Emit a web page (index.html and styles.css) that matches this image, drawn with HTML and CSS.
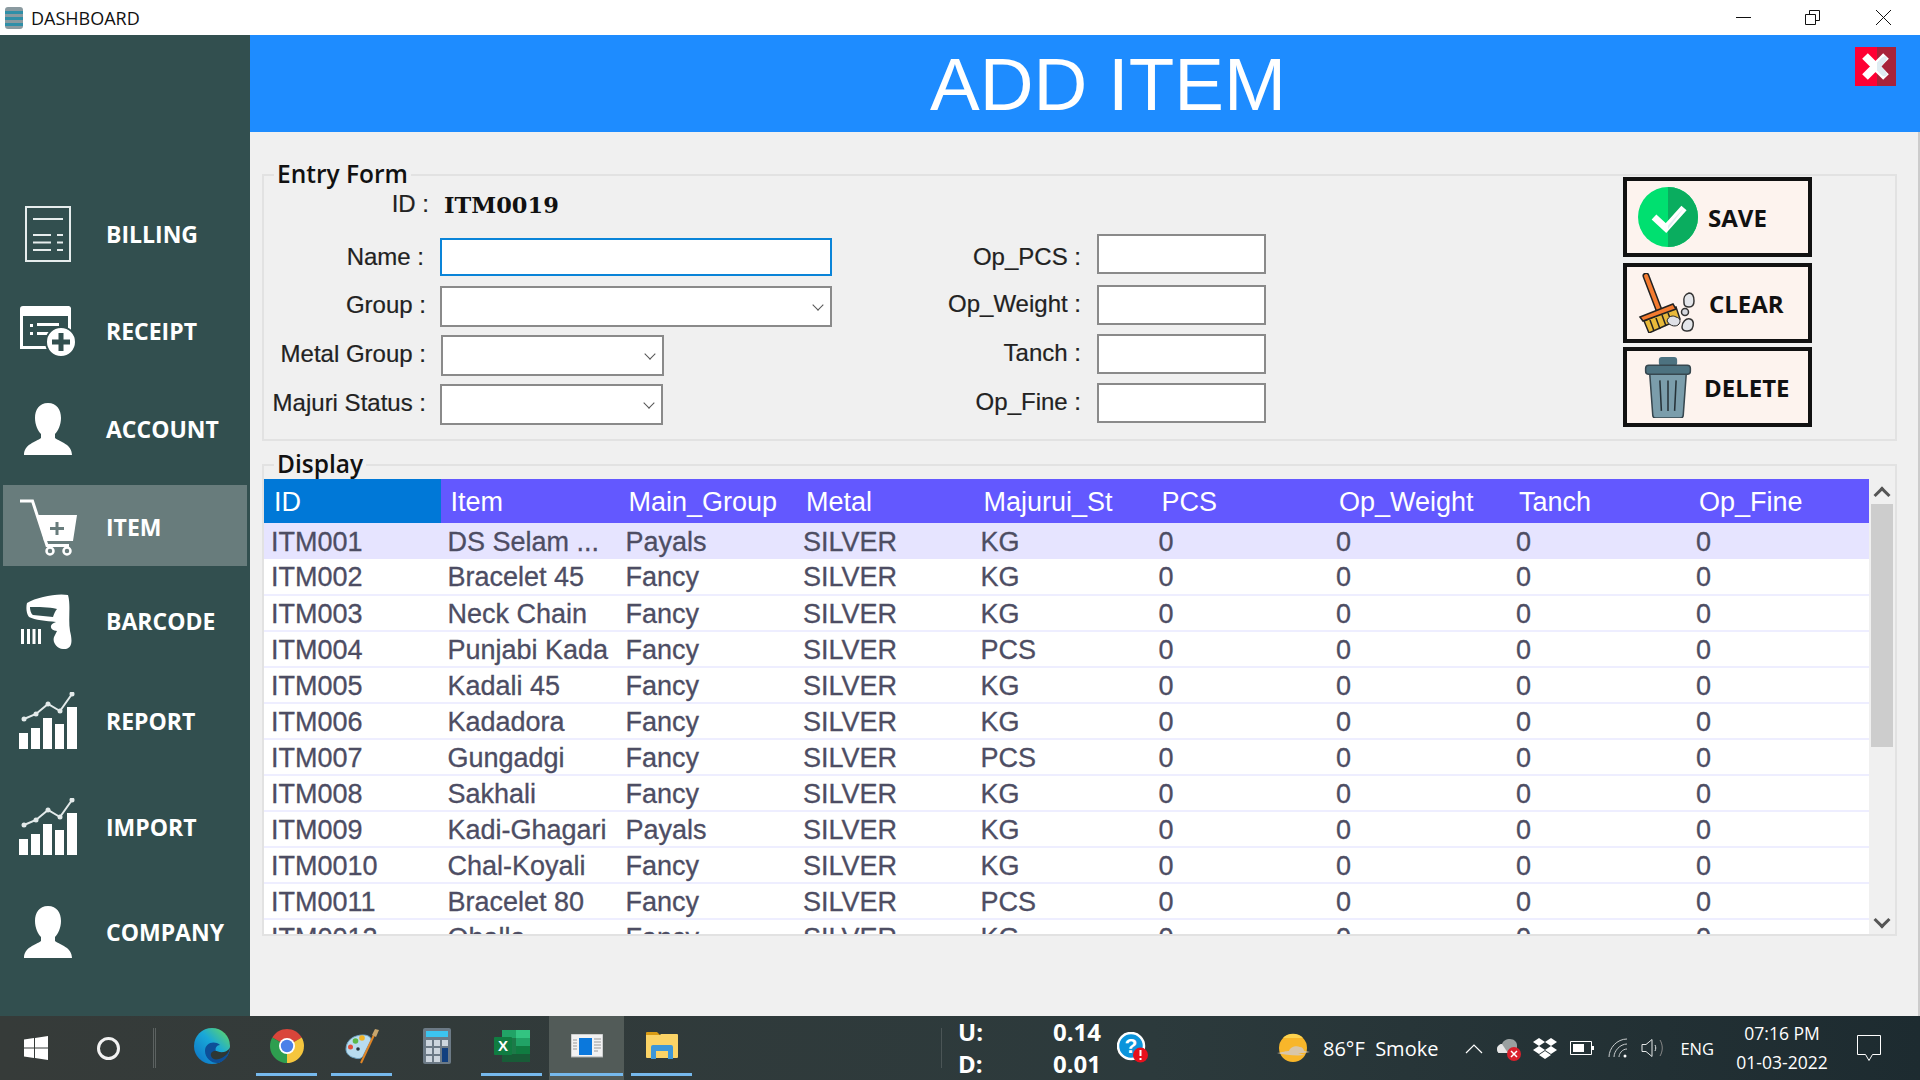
FILE: index.html
```html
<!DOCTYPE html>
<html lang="en">
  <head>
    <meta charset="UTF-8" />
    <title>DASHBOARD</title>
    <link rel="stylesheet" href="styles.css">
  </head>
  <body>
    <div class="titlebar">
      <svg class="title-icon" viewBox="0 0 20 24">
        <rect x="1" y="1" width="18" height="22" rx="3" fill="#8a9aa0"/>
        <rect x="1" y="5" width="18" height="3" fill="#2f8fa8"/>
        <rect x="1" y="11" width="18" height="3" fill="#2f8fa8"/>
        <rect x="1" y="17" width="18" height="3" fill="#2f8fa8"/>
      </svg>
      <span class="title-text">DASHBOARD</span>
      <div class="window-controls">
        <svg class="win-min" viewBox="0 0 15 15"><path d="M0 7.5h15" stroke="#111" fill="none"/></svg>
        <svg class="win-max" viewBox="0 0 15 15"><path d="M.5 4.5h10v10H.5zM4.500 4.500V.5h10v10h-4" stroke="#111" fill="none"/></svg>
        <svg class="win-close" viewBox="0 0 15 15"><path d="M0 0l15 15M15 0L0 15" stroke="#111" fill="none"/></svg>
      </div>
    </div>

    <div class="main">
      <nav class="sidebar">
        <a class="nav-item">
          <span class="nav-icon">
            <svg width="46" height="56" viewBox="0 0 46 56" fill="none" stroke="#e6eded" stroke-width="2">
              <rect x="1" y="1" width="44" height="54"/>
              <path d="M8 13h30M8 29h18M32 29h6M8 36.500h18M32 36.500h6M8 44h18M32 44h6"/>
            </svg>
          </span>
          <span>BILLING</span>
        </a>
        <a class="nav-item">
          <span class="nav-icon">
            <svg width="56" height="51" viewBox="0 0 56 51">
              <path d="M3 0h46a3 3 0 0 1 2 2v28h-3V10H3v30h26v3H0V3a3 3 0 0 1 3-3z" fill="#fff"/>
              <path d="M10 18h3v3h-3zM10 26h3v3h-3zM17 17h22v3H17zM17 26h14v3H17z" fill="#fff"/>
              <circle cx="41" cy="36" r="15" fill="#fff" stroke="#324f4f" stroke-width="2"/>
              <path d="M38.500 27h5v6.500H50v5h-6.500V45h-5v-6.500H32v-5h6.500z" fill="#324f4f"/>
            </svg>
          </span>
          <span>RECEIPT</span>
        </a>
        <a class="nav-item nav-account">
          <span class="nav-icon">
            <svg width="48" height="52" viewBox="0 0 48 52">
              <path class="person" d="M24 0C33 0 37 7 37 15 37 22 34 28 31 31V35C36 39 48 41 48 52H0C0 41 12 39 17 35V31C14 28 11 22 11 15 11 7 15 0 24 0Z"/>
            </svg>
          </span>
          <span>ACCOUNT</span>
        </a>
        <a class="nav-item nav-current active">
          <span class="nav-icon">
            <svg width="58" height="58" viewBox="0 0 58 58" fill="none" stroke="#fff">
              <path d="M1 3h12.500L28 47.500h22" stroke-width="3"/>
              <path d="M19 17h39l-4 26H25z" fill="#fff" stroke="none"/>
              <path d="M38 24v13M31 30.500h14" stroke="#687c7c" stroke-width="3"/>
              <circle cx="31" cy="53" r="3.500" stroke-width="2.500"/>
              <circle cx="48" cy="53" r="3.500" stroke-width="2.500"/>
            </svg>
          </span>
          <span>ITEM</span>
        </a>
        <a class="nav-item nav-barcode">
          <span class="nav-icon">
            <svg width="54" height="56" viewBox="0 0 54 56">
              <path fill="#fff" fill-rule="evenodd" d="M6 10C16 4 36 0 47 2 50 12 47 26 49 38 51 46 52 54 45 56 37 57 31 50 33 44L36 38C28 37 28 31 35 29 25 28 14 27 8 24 5 20 5 14 6 10ZM9 14C9 17 10 21 12 22L32 24C33 21 34 18 36 16 28 14 17 14 9 14Z"/>
              <path fill="#fff" d="M0 36h3v15H0zM6 36h3v15H6zM11.500 36h3v15h-3zM17 36h3v15h-3z"/>
            </svg>
          </span>
          <span>BARCODE</span>
        </a>
        <a class="nav-item nav-report">
          <span class="nav-icon">
            <svg width="58" height="58" viewBox="0 0 58 58">
              <path fill="#fff" d="M0 41h9v16H0zM12 36h9v21h-9zM24 26h9v31h-9zM36 32h9v25h-9zM48 15h10v42H48z"/>
              <path d="M5 27l12-5 12-10 12 7L53 2" fill="none" stroke="#e3eaea" stroke-width="2"/>
              <g fill="#e3eaea"><circle cx="5" cy="27" r="2.500"/><circle cx="17" cy="22" r="2.500"/><circle cx="29" cy="12" r="2.500"/><circle cx="41" cy="19" r="2.500"/><circle cx="53" cy="2" r="2.500"/></g>
            </svg>
          </span>
          <span>REPORT</span>
        </a>
        <a class="nav-item nav-import">
          <span class="nav-icon">
            <svg width="58" height="58" viewBox="0 0 58 58">
              <path fill="#fff" d="M0 41h9v16H0zM12 36h9v21h-9zM24 26h9v31h-9zM36 32h9v25h-9zM48 15h10v42H48z"/>
              <path d="M5 27l12-5 12-10 12 7L53 2" fill="none" stroke="#e3eaea" stroke-width="2"/>
              <g fill="#e3eaea"><circle cx="5" cy="27" r="2.500"/><circle cx="17" cy="22" r="2.500"/><circle cx="29" cy="12" r="2.500"/><circle cx="41" cy="19" r="2.500"/><circle cx="53" cy="2" r="2.500"/></g>
            </svg>
          </span>
          <span>IMPORT</span>
        </a>
        <a class="nav-item nav-company">
          <span class="nav-icon">
            <svg width="48" height="52" viewBox="0 0 48 52">
              <path class="person" d="M24 0C33 0 37 7 37 15 37 22 34 28 31 31V35C36 39 48 41 48 52H0C0 41 12 39 17 35V31C14 28 11 22 11 15 11 7 15 0 24 0Z"/>
            </svg>
          </span>
          <span>COMPANY</span>
        </a>
      </nav>

      <div class="content">
        <header class="page-header">
          <h1>ADD ITEM</h1>
          <button class="close-btn" type="button" aria-label="Close">
            <svg width="41" height="39" viewBox="0 0 41 39">
              <rect width="22" height="39" fill="#ff0033"/>
              <rect x="22" width="19" height="39" fill="#a8233a"/>
              <path d="M10 9l21 21M31 9L10 30" stroke="#fff" stroke-width="8" fill="none"/>
              <path d="M22 15.500L27 10.500 30 9l2 2-1 3-4.500 5.500 4.500 5 1 3-2 2-3-1-5-5z" fill="#e0ecf2"/>
            </svg>
          </button>
        </header>

        <div class="panels">
          <fieldset class="panel panel-entry">
            <legend>Entry Form</legend>
            <div class="entry-layout">
              <div class="form-left">
                <div class="field field-id">
                  <label>ID :</label>
                  <strong class="item-id">ITM0019</strong>
                </div>
                <div class="field field-name">
                  <label for="name">Name :</label>
                  <input class="input-wide input-focus" id="name" type="text" />
                </div>
                <div class="field field-group">
                  <label for="group">Group :</label>
                  <div class="combo combo-wide"><select id="group"></select></div>
                </div>
                <div class="field field-metal">
                  <label for="metal">Metal Group :</label>
                  <div class="combo combo-short"><select id="metal"></select></div>
                </div>
                <div class="field field-majuri">
                  <label for="majuri">Majuri Status :</label>
                  <div class="combo combo-short"><select id="majuri"></select></div>
                </div>
              </div>

              <div class="form-right">
                <div class="field-small field-pcs"><label for="pcs">Op_PCS :</label><input id="pcs" type="text" /></div>
                <div class="field-small field-weight"><label for="weight">Op_Weight :</label><input id="weight" type="text" /></div>
                <div class="field-small"><label for="tanch">Tanch :</label><input id="tanch" type="text" /></div>
                <div class="field-small"><label for="fine">Op_Fine :</label><input id="fine" type="text" /></div>
              </div>

              <div class="actions">
                <button class="action-btn" type="button">
                  <svg class="action-icon" width="60" height="60" viewBox="0 0 60 60">
                    <circle cx="30" cy="30" r="30" fill="#00e070"/>
                    <path d="M30 0a30 30 0 0 1 0 60z" fill="#0aad5f"/>
                    <path d="M16 30l12 11 18-20" fill="none" stroke="#fff" stroke-width="7"/>
                    <path d="M30 38.500L41.500 25.500 46 21l0 0 0 0-16 21z" fill="#e0ecf2"/>
                  </svg>
                  <span>SAVE</span>
                </button>
                <button class="action-btn action-clear" type="button">
                  <svg class="action-icon" width="58" height="60" viewBox="0 0 58 60">
                    <path d="M8 3l13 34" stroke="#222" stroke-width="7" stroke-linecap="round" fill="none"/>
                    <path d="M8 3l13 34" stroke="#f47b30" stroke-width="4" stroke-linecap="round" fill="none"/>
                    <path d="M6 48l32-14 4 12-31 14z" fill="#e8b93a" stroke="#222" stroke-width="1.500"/>
                    <path d="M12 47l4 11M18 45l4 11M24 42l4 11M30 40l4 10" stroke="#222" stroke-width="1.500"/>
                    <path d="M2 44l33-13 3 5-33 12z" fill="#f47b30" stroke="#222" stroke-width="1.500"/>
                    <path d="M29 48c1-5 6-6 9-4 4 1 5 4 3 7-2 3-9 3-12-3z" fill="#dfe0e6" stroke="#222"/>
                    <path d="M46 30c-1-5 1-9 5-10 4 0 5 4 5 8 0 4-2 6-5 6-3 0-5-1-5-4z" fill="#e4e6ea" stroke="#333" stroke-width="1.500"/>
                    <circle cx="47" cy="39" r="3.500" fill="#d6d8de" stroke="#333" stroke-width="1.500"/>
                    <path d="M44 54c0-5 4-9 8-8 4 1 4 6 2 10-2 3-10 3-10-2z" fill="#e4e6ea" stroke="#333" stroke-width="1.500"/>
                  </svg>
                  <span>CLEAR</span>
                </button>
                <button class="action-btn action-delete" type="button">
                  <svg class="action-icon" width="48" height="62" viewBox="0 0 46 61">
                    <rect x="14" y="1" width="18" height="9" rx="3" fill="#4d7280"/>
                    <path d="M5 17h36l-3 41q0 3-3 3H11q-3 0-3-3z" fill="#7b9dab" stroke="#37474f" stroke-width="1.500"/>
                    <rect x="1" y="9" width="44" height="9" rx="3" fill="#4d7280" stroke="#37474f" stroke-width="1.500"/>
                    <path d="M15 24l1.500 30M23 24v30M31 24l-1.500 30" stroke="#263238" stroke-width="1.500"/>
                  </svg>
                  <span>DELETE</span>
                </button>
              </div>
            </div>
          </fieldset>

          <fieldset class="panel panel-display">
            <legend>Display</legend>
            <div class="grid-wrap">
              <div class="grid-clip">
                <table class="grid">
                  <thead>
                    <tr>
                      <th class="sorted">ID</th><th>Item</th><th>Main_Group</th><th>Metal</th><th>Majurui_St</th><th>PCS</th><th>Op_Weight</th><th>Tanch</th><th>Op_Fine</th>
                    </tr>
                  </thead>
                  <tbody>
                    <tr class="selected"><td>ITM001</td><td>DS Selam ...</td><td>Payals</td><td>SILVER</td><td>KG</td><td>0</td><td>0</td><td>0</td><td>0</td></tr>
                    <tr><td>ITM002</td><td>Bracelet 45</td><td>Fancy</td><td>SILVER</td><td>KG</td><td>0</td><td>0</td><td>0</td><td>0</td></tr>
                    <tr><td>ITM003</td><td>Neck Chain</td><td>Fancy</td><td>SILVER</td><td>KG</td><td>0</td><td>0</td><td>0</td><td>0</td></tr>
                    <tr><td>ITM004</td><td>Punjabi Kada</td><td>Fancy</td><td>SILVER</td><td>PCS</td><td>0</td><td>0</td><td>0</td><td>0</td></tr>
                    <tr><td>ITM005</td><td>Kadali 45</td><td>Fancy</td><td>SILVER</td><td>KG</td><td>0</td><td>0</td><td>0</td><td>0</td></tr>
                    <tr><td>ITM006</td><td>Kadadora</td><td>Fancy</td><td>SILVER</td><td>KG</td><td>0</td><td>0</td><td>0</td><td>0</td></tr>
                    <tr><td>ITM007</td><td>Gungadgi</td><td>Fancy</td><td>SILVER</td><td>PCS</td><td>0</td><td>0</td><td>0</td><td>0</td></tr>
                    <tr><td>ITM008</td><td>Sakhali</td><td>Fancy</td><td>SILVER</td><td>KG</td><td>0</td><td>0</td><td>0</td><td>0</td></tr>
                    <tr><td>ITM009</td><td>Kadi-Ghagari</td><td>Payals</td><td>SILVER</td><td>KG</td><td>0</td><td>0</td><td>0</td><td>0</td></tr>
                    <tr><td>ITM0010</td><td>Chal-Koyali</td><td>Fancy</td><td>SILVER</td><td>KG</td><td>0</td><td>0</td><td>0</td><td>0</td></tr>
                    <tr><td>ITM0011</td><td>Bracelet 80</td><td>Fancy</td><td>SILVER</td><td>PCS</td><td>0</td><td>0</td><td>0</td><td>0</td></tr>
                    <tr><td>ITM0012</td><td>Ohalla</td><td>Fancy</td><td>SILVER</td><td>KG</td><td>0</td><td>0</td><td>0</td><td>0</td></tr>
                  </tbody>
                </table>
              </div>
              <div class="scrollbar">
                <span class="arrow arrow-up"></span>
                <div class="scroll-track"><div class="scroll-thumb"></div></div>
                <span class="arrow arrow-down"></span>
              </div>
            </div>
          </fieldset>
        </div>
      </div>
    </div>

    <footer class="taskbar">
      <div class="task-start">
        <svg width="24" height="24" viewBox="0 0 24 24"><path fill="#fff" d="M0 3.500l10-1.400v9.400H0zM11 2l13-2v11.500H11zM0 12.500h10v9.400L0 20.500zM11 12.500h13V24l-13-2z"/></svg>
      </div>
      <div class="task-search"><span class="search-ring"></span></div>
      <span class="task-sep"></span>

      <div class="task-btn">
        <svg width="36" height="36" viewBox="0 0 36 36">
          <defs>
            <linearGradient id="edgeA" x1="0" y1="1" x2="1" y2="0"><stop offset="0" stop-color="#0c6fc4"/><stop offset=".55" stop-color="#19a8d8"/><stop offset="1" stop-color="#6ade58"/></linearGradient>
          </defs>
          <circle cx="18" cy="18" r="18" fill="url(#edgeA)"/>
          <path d="M36 19C35 25 27 26 23 24 20 22 22 17 26 17 20 12 11 15 11 23 11 30 18 36 25 35 32 32 36 26 36 19Z" fill="#0d4f98"/>
          <path d="M36 20C33 24 28 25 24 23.500 20 22 16 24 17 28 18 31 21 32 25 31 31 29 35 25 36 20Z" fill="#2e3735"/>
        </svg>
      </div>
      <div class="task-btn task-open">
        <svg width="34" height="34" viewBox="-17 -17 34 34">
          <path d="M0 0L-14.700 -8.500A17 17 0 0 1 14.700 -8.500z" fill="#d9453a"/>
          <path d="M0 0L14.700 -8.500A17 17 0 0 1 0 17z" fill="#f5c63e"/>
          <path d="M0 0L0 17A17 17 0 0 1 -14.700 -8.500z" fill="#2e9e4f"/>
          <circle r="8" fill="#fff"/>
          <circle r="6.200" fill="#4a80e8"/>
        </svg>
      </div>
      <div class="task-btn task-open">
        <svg width="36" height="36" viewBox="0 0 36 36">
          <path d="M2 21C2 12 10 7 19 7c5 0 8 2 8 5L19 28c-2 3-5 3-8 2-5-1-9-4-9-9z" fill="#b8dcef" stroke="#6fa4c4"/>
          <circle cx="6.500" cy="19" r="2.500" fill="#e0503c"/>
          <circle cx="11.500" cy="13" r="2.800" fill="#5cb848"/>
          <circle cx="18" cy="10" r="2.800" fill="#f1b325"/>
          <circle cx="14" cy="21" r="1.800" fill="#25343c"/>
          <path d="M17 35L30 7" stroke="#e08526" stroke-width="2"/>
          <path d="M28 7l3-6 4 1-3 7z" fill="#c7a56d"/>
        </svg>
      </div>
      <div class="task-btn">
        <svg width="28" height="36" viewBox="0 0 28 36">
          <rect width="28" height="36" rx="2" fill="#6c7a86"/>
          <rect x="3" y="3" width="22" height="6" fill="#3cc4ef"/>
          <g fill="#cdd6de">
            <rect x="3" y="12" width="6" height="6"/><rect x="11" y="12" width="6" height="6"/><rect x="19" y="12" width="6" height="6"/>
            <rect x="3" y="20" width="6" height="6"/><rect x="11" y="20" width="6" height="6"/>
            <rect x="3" y="28" width="6" height="6"/><rect x="11" y="28" width="6" height="6"/>
          </g>
          <rect x="19" y="20" width="6" height="14" fill="#12407f"/>
        </svg>
      </div>
      <div class="task-btn task-open">
        <svg width="36" height="33" viewBox="0 0 36 33">
          <rect x="8" width="28" height="32" rx="1" fill="#1c7a48"/>
          <rect x="22" width="14" height="8" fill="#33c481"/>
          <rect x="8" width="14" height="8" fill="#21a366"/>
          <rect x="22" y="8" width="14" height="8" fill="#21a366"/>
          <rect x="22" y="16" width="14" height="8" fill="#107c41"/>
          <rect x="8" y="24" width="28" height="8" fill="#185c37"/>
          <rect y="7" width="18" height="18" rx="1" fill="#107c41"/>
          <text class="excel-x" x="9" y="21">X</text>
        </svg>
      </div>
      <div class="task-btn task-open task-active">
        <svg width="32" height="24" viewBox="0 0 32 24">
          <rect width="32" height="23" fill="#f2f2f2" stroke="#a9adac"/>
          <rect x="8" y="4" width="13" height="17" fill="#0b78dc"/>
          <path d="M2 6h4M2 9h4M2 12h4M2 15h4M23 5h7M23 8h7M23 11h7M23 14h7M23 17h4" stroke="#999" stroke-width="1.200"/>
        </svg>
      </div>
      <div class="task-btn task-open">
        <svg width="32" height="28" viewBox="0 0 32 28">
          <path d="M0 1a1 1 0 0 1 1-1h10l3 3h-14z" fill="#d99b14"/>
          <path d="M0 3h14l1-1h16a1 1 0 0 1 1 1v22a1 1 0 0 1-1 1H1a1 1 0 0 1-1-1z" fill="#fbd366"/>
          <path d="M5 27V15a2 2 0 0 1 2-2h18a2 2 0 0 1 2 2v12h-5V19H10v8z" fill="#3d97d9"/>
        </svg>
      </div>

      <span class="tray-sep"></span>
      <div class="netspeed">
        <div class="net-row"><b>U:</b><b>0.14</b></div>
        <div class="net-row"><b>D:</b><b>0.01</b></div>
      </div>
      <svg class="help-icon" width="32" height="32" viewBox="0 0 32 32">
        <circle cx="14" cy="14" r="13" fill="#0b94db" stroke="#fff" stroke-width="2.500"/>
        <text class="help-q" x="14" y="21">?</text>
        <circle cx="23.500" cy="23" r="7.500" fill="#e8101c"/>
        <path d="M23.500 18v6M23.500 26v2" stroke="#fff" stroke-width="2"/>
      </svg>
      <svg class="weather-icon" width="36" height="30" viewBox="0 0 36 30">
        <circle cx="18" cy="15" r="14" fill="#f8b62a"/>
        <path d="M8 5a14 14 0 0 1 20 0z" fill="#fdd34e"/>
        <path d="M2 20c6-1 9-2 12-2 1-4 7-6 11-4 2 0 4 2 4 4l6 1c-4 1-9 1-12 1l7 2c-8 1-20 0-28-2z" fill="#d9c6a8"/>
      </svg>
      <span class="weather-text">86°F&nbsp; Smoke</span>

      <svg class="tray-icon tray-chevron" width="18" height="11" viewBox="0 0 18 11"><path d="M1 10l8-8 8 8" fill="none" stroke="#fff" stroke-width="1.200"/></svg>
      <svg class="tray-icon tray-cloud" width="26" height="26" viewBox="0 0 26 26">
        <path d="M1 14c0-3 3-5 5-5 1-3 4-5 8-5 4 0 7 3 7 6v8H3c-1 0-2-2-2-4z" fill="#9aa0a0"/>
        <path d="M1 14c0-3 3-5 5-5l6 9H3c-1 0-2-2-2-4z" fill="#e6e6e6"/>
        <circle cx="18" cy="19" r="7" fill="#d9202c"/>
        <path d="M15 16l6 6M21 16l-6 6" stroke="#fff" stroke-width="1.500"/>
      </svg>
      <svg class="tray-icon tray-dropbox" width="24" height="21" viewBox="0 0 24 21"><path fill="#fff" d="M6 0l6 4-6 4-6-4zM18 0l6 4-6 4-6-4zM6 8l6 4-6 4-6-4zM18 8l6 4-6 4-6-4zM12 13l6 4-6 4-6-4z"/></svg>
      <svg class="tray-icon tray-battery" width="24" height="14" viewBox="0 0 24 14"><path d="M.5.500h21v13H.5z" fill="none" stroke="#fff"/><path d="M3 3h11v8H3z" fill="#fff"/><path d="M22 5h2v4h-2z" fill="#fff"/></svg>
      <svg class="tray-icon tray-wifi" width="20" height="20" viewBox="0 0 20 20" fill="none" stroke="#c9cdce"><path d="M1 19C1 10 9 1 19 1M6 19c0-6 6-13 13-13M11 19c0-3 3-8 8-8"/><circle cx="17" cy="18" r="1.500" fill="#fff" stroke="none"/></svg>
      <svg class="tray-icon tray-sound" width="23" height="20" viewBox="0 0 23 20" fill="none" stroke="#e4e7e7"><path d="M1 6.500h4l6-5v17l-6-5H1z"/><path d="M14 7c1 2 1 4 0 6"/><path d="M19 2c3 5 3 11 0 16" stroke="#888"/></svg>
      <span class="tray-lang">ENG</span>
      <div class="clock"><span>07:16 PM</span><span>01-03-2022</span></div>
      <svg class="tray-note" width="24" height="27" viewBox="0 0 24 27"><path d="M.5.500h23v19h-8l-3.500 6-3.500-6h-8z" fill="none" stroke="#fff"/></svg>
    </footer>
  </body>
</html>
```

FILE: styles.css
```css
:root {
  --side-bg: #324f4f;
  --side-active: #687c7c;
  --head-blue: #1e8cff;
  --grid-head: #6358ff;
  --panel-bg: #f0f0f0;
  --line: #e2e2e2;
}

* {
  box-sizing: border-box;
  margin: 0;
  padding: 0;
}

html,
body {
  width: 1920px;
  height: 1080px;
  overflow: hidden;
}

body {
  font-family: "Liberation Sans", Arial, sans-serif;
  background-color: var(--panel-bg);
  display: flex;
  flex-direction: column;
}

svg {
  display: block;
  flex-shrink: 0;
}

/* window title */
.titlebar {
  height: 35px;
  background: #fff;
  display: flex;
  align-items: center;
  padding-left: 4px;
}

.title-icon {
  width: 20px;
  height: 26px;
}

.title-text {
  font-family: "Open Sans", sans-serif;
  font-size: 18px;
  margin-left: 7px;
  color: #111;
}

.window-controls {
  margin-left: auto;
  display: flex;
  align-items: center;
  padding-right: 29px;
  gap: 54px;
}

.window-controls svg {
  width: 15px;
  height: 15px;
}

.win-close {
  margin-left: 2px;
}

/* main area */
.main {
  height: 981px;
  display: flex;
}

.sidebar {
  width: 250px;
  background-color: var(--side-bg);
  padding: 157px 3px 0;
  display: flex;
  flex-direction: column;
  gap: 16px;
}

.nav-item {
  height: 81px;
  padding-top: 3px;
  flex-shrink: 0;
  display: flex;
  align-items: center;
  color: #fff;
  font-family: "Open Sans", sans-serif;
  font-weight: 700;
  font-size: 23px;
}

.nav-item.active {
  background-color: var(--side-active);
}

.nav-icon {
  width: 90px;
  margin-right: 13px;
  display: flex;
  justify-content: center;
}

.person {
  fill: #fff;
}

.nav-account {
  margin-top: 1px;
}

.nav-current {
  margin-top: 1px;
}

.nav-barcode {
  margin-top: -3px;
}

.nav-report {
  margin-top: 3px;
}

.nav-import {
  margin-top: 9px;
}

.nav-company {
  margin-top: 8px;
}

.content {
  width: 1670px;
  display: flex;
  flex-direction: column;
}

.page-header {
  position: relative;
  height: 97px;
  background-color: var(--head-blue);
  text-align: center;
  padding-left: 46px;
}

.page-header h1 {
  font-size: 74.500px;
  font-weight: 400;
  line-height: 99px;
  color: #fff;
}

.close-btn {
  position: absolute;
  top: 12px;
  right: 24px;
  border: none;
  background: none;
}

.panels {
  flex: 1;
  padding: 28px 21px 0 12px;
  border-right: 2px solid #ccc;
}

.panel {
  border: 2px solid var(--line);
}

.panel legend {
  margin-left: 10px;
  padding: 0 3px;
  font-family: "Open Sans", sans-serif;
  font-weight: 600;
  font-size: 24.500px;
  color: #111;
}

.panel-entry {
  height: 281px;
}

.panel-entry legend {
  line-height: 28px;
  padding-bottom: 2px;
}

.panel-display {
  height: 485px;
  margin-top: 10px;
}

.panel-display legend {
  line-height: 26px;
  padding-bottom: 2px;
}

/* entry form */
.entry-layout {
  display: flex;
  align-items: flex-start;
}

.form-left {
  width: 568px;
  display: flex;
  flex-direction: column;
  gap: 9px;
}

.field {
  height: 41px;
  display: flex;
  align-items: center;
}

.field label {
  width: 162px;
  margin-right: 14px;
  padding-bottom: 3px;
  text-align: right;
  font-size: 24px;
  color: #222;
  white-space: nowrap;
  -webkit-text-stroke: 0.2px #222;
}

.field-id {
  height: 30px;
  margin-bottom: 9px;
}

.field-id label {
  width: 165px;
  margin-right: 15px;
}

.field-name {
  height: 38px;
}

.field-name label {
  width: 160px;
  margin-right: 16px;
  padding-bottom: 0;
}

.field-group {
  margin-top: 1px;
  margin-bottom: -1px;
}

.field-metal .combo {
  margin-left: 1px;
}

.field-majuri {
  margin-top: -1px;
}

.item-id {
  font-family: "DejaVu Serif", serif;
  font-size: 22.500px;
  color: #111;
}

input,
select {
  background: #fff;
  border: 2px solid #8a8a8a;
  outline: none;
}

.input-wide {
  width: 392px;
  height: 38px;
}

.input-focus {
  border-color: #0a84d8;
}

.combo {
  position: relative;
  height: 41px;
}

.combo select {
  width: 100%;
  height: 100%;
  appearance: none;
}

.combo::after {
  content: "";
  position: absolute;
  top: 15px;
  right: 10px;
  width: 7px;
  height: 7px;
  border-right: 1.500px solid #555;
  border-bottom: 1.500px solid #555;
  transform: rotate(45deg);
}

.combo-wide {
  width: 392px;
}

.combo-short {
  width: 223px;
}

.form-right {
  margin-top: 44px;
  margin-left: 49px;
  display: flex;
  flex-direction: column;
  gap: 9px;
}

.field-small {
  height: 40px;
  display: flex;
  align-items: center;
}

.field-small label {
  width: 200px;
  margin-right: 16px;
  padding-bottom: 2px;
  text-align: right;
  font-size: 24px;
  color: #222;
  -webkit-text-stroke: 0.2px #222;
}

.field-small input {
  width: 169px;
  height: 40px;
}

.field-pcs label {
  padding: 5px 0 0;
}

.field-weight {
  margin-top: 2px;
}

.actions {
  margin-top: -13px;
  margin-left: 357px;
  display: flex;
  flex-direction: column;
  gap: 4px;
}

.action-btn {
  width: 189px;
  height: 80px;
  padding-left: 11px;
  border: 4px solid #111;
  background-color: #fdf3ee;
  display: flex;
  align-items: center;
  gap: 10px;
  font-family: "Open Sans", sans-serif;
  font-weight: 700;
  font-size: 24px;
  color: #111;
}

.action-clear {
  margin-top: 2px;
}

.action-clear span {
  margin-left: 3px;
}

.action-delete .action-icon {
  margin: 0 6px;
}

.action-delete span {
  margin-left: -4px;
}

/* display grid */
.grid-wrap {
  display: flex;
  gap: 2px;
}

.grid-clip {
  width: 1605px;
  height: 455px;
  overflow: hidden;
  background: #fff;
}

.grid {
  width: 1605px;
  table-layout: fixed;
  border-collapse: collapse;
  font-size: 27px;
}

.grid th {
  width: 177.500px;
  height: 44px;
  padding: 2px 0 0 10px;
  text-align: left;
  font-weight: 400;
  color: #fff;
  background-color: var(--grid-head);
}

.grid th:first-child {
  width: 176.500px;
}

.grid th:nth-child(2) {
  width: 178px;
}

.grid th:nth-child(5) {
  width: 178px;
}

.grid th:nth-child(n + 7) {
  width: 180px;
}

.grid th.sorted {
  background-color: #0078d7;
}

.grid td {
  height: 36px;
  padding: 2px 0 0 7px;
  color: #4d4d63;
  white-space: nowrap;
  overflow: hidden;
  border-bottom: 2px solid #eeeeff;
  -webkit-text-stroke: 0.3px #4d4d63;
}

.grid tr.selected td {
  background-color: #e6e4ff;
  border-bottom: none;
}

.scrollbar {
  width: 22px;
  height: 455px;
  display: flex;
  flex-direction: column;
  align-items: center;
}

.arrow {
  height: 25px;
  flex-shrink: 0;
  position: relative;
  width: 100%;
}

.arrow::after {
  content: "";
  position: absolute;
  left: 5px;
  width: 9px;
  height: 9px;
  border-left: 3px solid #555;
  border-top: 3px solid #555;
}

.arrow-up::after {
  top: 10px;
  transform: rotate(45deg);
}

.arrow-down::after {
  top: 5px;
  transform: rotate(225deg);
}

.scroll-track {
  flex: 1;
  width: 100%;
}

.scroll-thumb {
  height: 243px;
  background-color: #cdcdcd;
}

/* taskbar */
.taskbar {
  height: 64px;
  display: flex;
  align-items: center;
  color: #fff;
  font-family: "Open Sans", sans-serif;
  background: linear-gradient(90deg, #363b39 0%, #2c3a3c 60%, #1d2b30 100%);
}

.task-start,
.task-search {
  width: 72px;
  display: flex;
  justify-content: center;
}

.search-ring {
  width: 23px;
  height: 23px;
  border: 3px solid #f2f2f2;
  border-radius: 50%;
}

.task-sep {
  width: 3px;
  height: 40px;
  margin: 0 18px 0 9px;
  border-left: 1px solid #5c6261;
  border-right: 1px solid #5c6261;
}

.task-btn {
  position: relative;
  width: 75px;
  height: 64px;
  padding-bottom: 4px;
  display: flex;
  align-items: center;
  justify-content: center;
}

.task-open::after {
  content: "";
  position: absolute;
  left: 7px;
  right: 7px;
  bottom: 4px;
  height: 3px;
  background-color: #76b9ed;
}

.task-active {
  background-color: #525b58;
}

.task-active::after {
  left: 1px;
  right: 1px;
}

.excel-x {
  font-family: "Liberation Sans", sans-serif;
  font-size: 15px;
  font-weight: 700;
  fill: #fff;
  text-anchor: middle;
}

.help-q {
  font-family: "Liberation Sans", sans-serif;
  font-size: 21px;
  font-weight: 700;
  fill: #fff;
  text-anchor: middle;
}

.tray-sep {
  width: 1px;
  height: 40px;
  margin-left: 242px;
  background-color: #4b5556;
}

.netspeed {
  width: 143px;
  margin-left: 16px;
  display: flex;
  flex-direction: column;
  gap: 2px;
  font-size: 24px;
  line-height: 30px;
}

.net-row {
  display: flex;
  justify-content: space-between;
}

.help-icon {
  margin-left: 16px;
}

.weather-icon {
  margin-left: 126px;
}

.weather-text {
  margin-left: 12px;
  font-size: 20px;
  white-space: nowrap;
}

.tray-chevron {
  margin-left: 27px;
}

.tray-cloud {
  margin-left: 13px;
}

.tray-dropbox {
  margin-left: 11px;
}

.tray-battery {
  margin-left: 13px;
}

.tray-wifi {
  margin-left: 14px;
}

.tray-sound {
  margin-left: 13px;
}

.tray-lang {
  margin-left: 16px;
  font-size: 16.500px;
}

.clock {
  width: 140px;
  margin-left: -2px;
  display: flex;
  flex-direction: column;
  align-items: center;
  font-size: 17.500px;
  line-height: 29px;
}

.tray-note {
  margin-left: 5px;
}
```
